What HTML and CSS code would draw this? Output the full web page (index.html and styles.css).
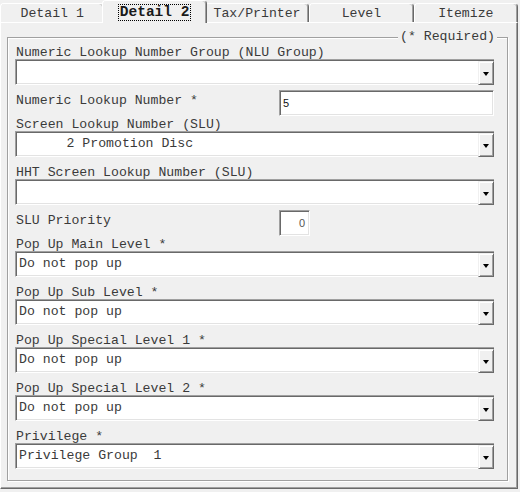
FILE: index.html
```html
<!DOCTYPE html>
<html>
<head>
<meta charset="utf-8">
<link rel="stylesheet" href="styles.css">
</head>
<body>
<div class="window">
  <div class="tabs">
    <div class="tab">Detail 1</div>
    <div class="tab active"><span class="focus">Detail 2</span></div>
    <div class="tab">Tax/Printer</div>
    <div class="tab">Level</div>
    <div class="tab">Itemize</div>
  </div>
  <div class="panel">
    <div class="group">
      <div class="legend">(* Required)</div>

      <div class="field first">
        <div class="label">Numeric Lookup Number Group (NLU Group)</div>
        <div class="combo"><span class="value"></span><span class="btn"><i class="arrow"></i></span></div>
      </div>

      <div class="row">
        <div class="label">Numeric Lookup Number *</div>
        <div class="edit">5</div>
      </div>

      <div class="field after-row">
        <div class="label">Screen Lookup Number (SLU)</div>
        <div class="combo"><span class="value">      2 Promotion Disc</span><span class="btn"><i class="arrow"></i></span></div>
      </div>

      <div class="field">
        <div class="label">HHT Screen Lookup Number (SLU)</div>
        <div class="combo"><span class="value"></span><span class="btn"><i class="arrow"></i></span></div>
      </div>

      <div class="row row-small">
        <div class="label">SLU Priority</div>
        <div class="edit num">0</div>
      </div>

      <div class="field after-row">
        <div class="label">Pop Up Main Level *</div>
        <div class="combo"><span class="value">Do not pop up</span><span class="btn"><i class="arrow"></i></span></div>
      </div>

      <div class="field">
        <div class="label">Pop Up Sub Level *</div>
        <div class="combo"><span class="value">Do not pop up</span><span class="btn"><i class="arrow"></i></span></div>
      </div>

      <div class="field">
        <div class="label">Pop Up Special Level 1 *</div>
        <div class="combo"><span class="value">Do not pop up</span><span class="btn"><i class="arrow"></i></span></div>
      </div>

      <div class="field">
        <div class="label">Pop Up Special Level 2 *</div>
        <div class="combo"><span class="value">Do not pop up</span><span class="btn"><i class="arrow"></i></span></div>
      </div>

      <div class="field">
        <div class="label">Privilege *</div>
        <div class="combo"><span class="value">Privilege Group  1</span><span class="btn"><i class="arrow"></i></span></div>
      </div>
    </div>
  </div>
</div>
</body>
</html>
```
FILE: styles.css
```css
* { box-sizing: border-box; }

body {
  margin: 0;
  background: #f0f0f0;
  font-family: "Liberation Mono", "Courier New", monospace;
  font-size: 13.2px;
  color: #3a3a3a;
}

.window {
  width: 518px;
  height: 492px;
}

/* ---------- tabs ---------- */
.tabs {
  display: flex;
  align-items: flex-end;
  height: 22px;
  position: relative;
  z-index: 1;
}

.tab {
  flex: 1;
  height: 19px;
  border: 1px solid #fff;
  border-right-color: #696969;
  border-bottom: none;
  border-radius: 4px 4px 0 0;
  box-shadow: inset -1px 0 0 #a0a0a0;
  background: #f0f0f0;
  text-align: center;
  line-height: 19px;
  white-space: nowrap;
}

.tab.active {
  height: 23px;
  margin: 0 -2px -1px;
  padding-top: 4px;
  line-height: 15px;
  position: relative;
  z-index: 2;
  font-size: 14.5px;
  font-weight: bold;
  color: #1a1a1a;
}

.focus {
  display: inline-block;
  outline: 1px dotted #000;
  padding: 0 1px;
}

/* ---------- tab page ---------- */
.panel {
  height: 467px;
  border: 1px solid #fff;
  border-right-color: #696969;
  border-bottom-color: #696969;
  box-shadow: inset -1px -1px 0 #a0a0a0;
  padding: 14px 9px 0 6px;
}

.group {
  position: relative;
  height: 444px;
  border: 1px solid #a0a0a0;
  box-shadow: 1px 1px 0 #fff, inset 1px 1px 0 #fff;
  padding: 6px 13px 0 7px;
}

.legend {
  position: absolute;
  right: 10px;
  top: -9px;
  line-height: 16px;
  padding: 0 2px;
  background: #f0f0f0;
}

.label {
  height: 15px;
  line-height: 18px;
  padding-left: 1px;
  white-space: pre;
}

.field { margin-top: 7px; }
.field.first,
.field.after-row { margin-top: 0; }

/* ---------- combo box ---------- */
.combo {
  display: flex;
  height: 26px;
  background: #fff;
  border: 1px solid #fff;
  border-top-color: #a0a0a0;
  border-left-color: #a0a0a0;
  border-right: none;
  box-shadow: inset 1px 1px 0 #696969, inset 0 -1px 0 #e3e3e3;
}

.value {
  flex: 1;
  padding-left: 3px;
  line-height: 24px;
  white-space: pre;
}

.btn {
  width: 16px;
  margin-top: 1px;
  margin-bottom: -1px;
  background: #f0f0f0;
  border: 1px solid #f0f0f0;
  border-right-color: #696969;
  border-bottom-color: #696969;
  box-shadow: inset 1px 1px 0 #fff, inset -1px -1px 0 #a0a0a0;
  display: flex;
  align-items: center;
  justify-content: center;
}

.arrow {
  width: 0;
  height: 0;
  border-left: 3px solid transparent;
  border-right: 3px solid transparent;
  border-top: 4px solid #000;
  margin-top: 1px;
}

/* ---------- label + edit rows ---------- */
.row {
  display: grid;
  grid-template-columns: 264px 1fr;
  margin-top: 5px;
}

.row .label { padding-top: 3px; height: auto; line-height: 15px; }

.row-small { grid-template-columns: 264px 31px; }

.edit {
  height: 26px;
  background: #fff;
  border: 1px solid #fff;
  border-top-color: #a0a0a0;
  border-left-color: #a0a0a0;
  box-shadow: inset 1px 1px 0 #696969, inset -1px -1px 0 #e3e3e3;
  font-family: "Liberation Sans", Arial, sans-serif;
  font-size: 11px;
  line-height: 25px;
  padding-left: 3px;
  color: #111;
}

.edit.num {
  text-align: right;
  padding-right: 4px;
  color: #555;
}
```
